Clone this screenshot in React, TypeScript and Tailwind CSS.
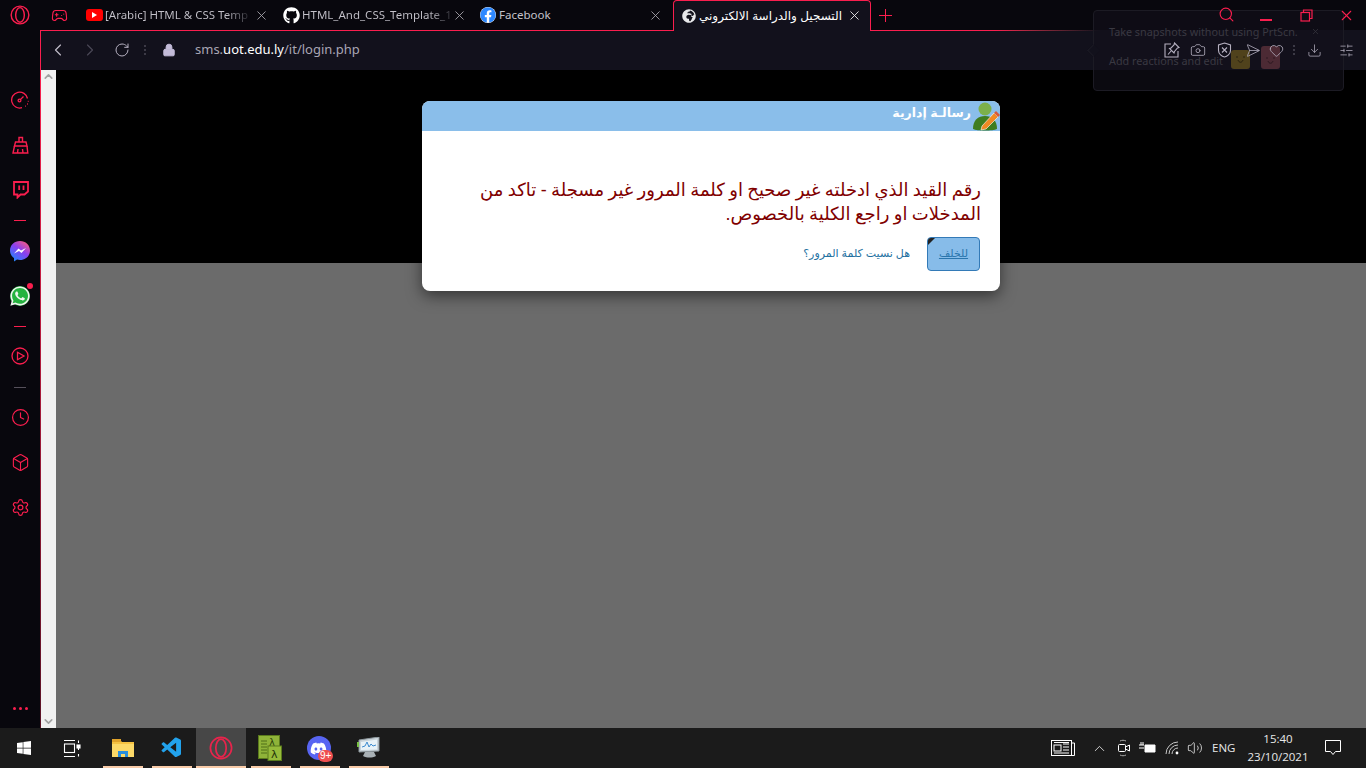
import React from "react";
import { ChevronLeft, ChevronRight, RotateCw, Lock, X, Search, Clock, Box, Settings, Gamepad2, Camera, Heart, Download, SlidersHorizontal, ChevronUp, ChevronDown, Send, Volume2 } from "lucide-react";
import { FaWhatsapp, FaWindows, FaDiscord, FaGithub, FaFacebook, FaGlobeAfrica } from "react-icons/fa";
import { VscVscode } from "react-icons/vsc";

const PINK = "#fa1e4e";

function OperaLogo({ size = 20, color = PINK }: { size?: number; color?: string }) {
  return (
    <svg width={size} height={size} viewBox="0 0 24 24" fill="none" stroke={color} strokeWidth="1.7">
      <circle cx="12" cy="12" r="10.6" />
      <ellipse cx="12" cy="12" rx="5.2" ry="8.8" />
    </svg>
  );
}

function Tab({ icon, title, fade }: { icon: React.ReactNode; title: string; fade?: boolean }) {
  return (
    <div className="w-[197px] h-[30px] flex items-center pl-[7px] pr-[6px] shrink-0">
      <span className="w-[18px] h-[18px] flex items-center justify-center shrink-0">{icon}</span>
      <span className={`ml-[2px] text-[11.5px] whitespace-nowrap font-['Noto_Sans',sans-serif] ${fade ? "bg-gradient-to-r from-[#c4c2ca] from-[85%] to-[#2a2930] bg-clip-text text-transparent" : "text-[#c4c2ca]"}`}>{title}</span>
      <div className="flex-1" />
      <X size={15} strokeWidth={1.4} className="text-[#a8a6ad] shrink-0" />
    </div>
  );
}

function SideIcon({ children, h }: { children?: React.ReactNode; h: number }) {
  return <div className="w-full flex items-center justify-center shrink-0" style={{ height: h }}>{children}</div>;
}

function Divider() {
  return <div className="w-[12px] h-px bg-[#fa1e4e]" />;
}

function Sidebar() {
  const c = { color: PINK };
  return (
    <div className="w-[40px] h-full bg-[#08070d] flex flex-col items-center shrink-0">
      <div className="h-[30px] flex items-center justify-center shrink-0"><OperaLogo /></div>
      <div className="h-[51px] shrink-0" />
      <SideIcon h={38}>
        <svg width="18" height="18" viewBox="0 0 18 18" fill="none" stroke={PINK} strokeWidth="1.3">
          <path d="M16.5 7.5 A8 8 0 1 0 11 16.7" />
          <circle cx="8.5" cy="9.5" r="1.4" />
          <path d="M9.6 8.4 L12.5 5.5" />
          <path d="M14 15.2 h.8 M16 13 h.8 M16.8 10.4 h.8" />
        </svg>
      </SideIcon>
      <SideIcon h={52}>
        <svg width="17" height="18" viewBox="0 0 17 18" fill="none" stroke={PINK} strokeWidth="1.4">
          <path d="M7 6 V1.5 H10.5 V6" />
          <path d="M3.5 6 H14 L15 10 H2.5 Z" />
          <path d="M2.5 10 L1 17 H15.8 L15 10" />
          <path d="M6 13 L5.5 17 M10.5 13 L11 17" />
        </svg>
      </SideIcon>
      <SideIcon h={38}>
        <svg width="17" height="18" viewBox="0 0 17 18" fill="none" stroke={PINK} strokeWidth="1.8">
          <path d="M2 1 H16 V10.5 L12.5 13.5 H8.5 L5.5 16.5 V13.5 H2 Z" />
          <path d="M7.2 4.5 V9 M11.5 4.5 V9" />
        </svg>
      </SideIcon>
      <SideIcon h={22}><Divider /></SideIcon>
      <SideIcon h={40}>
        <svg width="20" height="21" viewBox="0 0 20 21">
          <defs>
            <linearGradient id="msg" x1="0.15" y1="1" x2="0.85" y2="0">
              <stop offset="0" stopColor="#1a8cff" />
              <stop offset="0.55" stopColor="#8a3ff0" />
              <stop offset="1" stopColor="#ff5c7a" />
            </linearGradient>
          </defs>
          <path d="M10 0 C15.7 0 20 4 20 9.5 C20 15 15.7 19 10 19 C9 19 8 18.9 7 18.6 L4 20.5 V17 C1.5 15.2 0 12.6 0 9.5 C0 4 4.3 0 10 0 Z" fill="url(#msg)" />
          <path d="M4 12.5 L8.5 7.5 L11 9.5 L16 7 L11.5 12 L9 10 Z" fill="#fff" />
        </svg>
      </SideIcon>
      <SideIcon h={50}>
        <span className="relative w-[20px] h-[20px] rounded-full bg-[#25b33f] flex items-center justify-center">
          <FaWhatsapp size={22} className="text-[#f0f5ef] absolute" />
          <span className="absolute -top-[3px] -right-[3px] w-[6px] h-[6px] rounded-full bg-[#fa1e4e]" />
        </span>
      </SideIcon>
      <SideIcon h={10}><Divider /></SideIcon>
      <SideIcon h={50}>
        <svg width="18" height="18" viewBox="0 0 18 18" fill="none" stroke={PINK} strokeWidth="1.3">
          <circle cx="9" cy="9" r="8" />
          <path d="M6.5 5.3 L13 9 L6.5 12.7 Z" />
        </svg>
      </SideIcon>
      <SideIcon h={12}><div className="w-[12px] h-px bg-[#55505a]" /></SideIcon>
      <SideIcon h={48}><Clock size={19} strokeWidth={1.5} style={c} /></SideIcon>
      <SideIcon h={42}><Box size={19} strokeWidth={1.4} style={c} /></SideIcon>
      <SideIcon h={48}><Settings size={19} strokeWidth={1.5} style={c} /></SideIcon>
      <div className="flex-1" />
      <div className="flex gap-[3px] mb-[18px]">
        <span className="w-[3px] h-[3px] rounded-full bg-[#fa1e4e]" />
        <span className="w-[3px] h-[3px] rounded-full bg-[#fa1e4e]" />
        <span className="w-[3px] h-[3px] rounded-full bg-[#fa1e4e]" />
      </div>
    </div>
  );
}

function TabStrip() {
  return (
    <div className="h-[31px] flex items-start bg-[#08070d] shrink-0 relative">
      <div className="absolute left-0 right-0 bottom-0 h-px bg-gradient-to-r from-[#fa1e4e] from-[72%] to-[#12111c] to-[80%]" />
      <div className="w-[38px] h-[30px] flex items-center justify-center shrink-0"><Gamepad2 size={17} strokeWidth={1.6} style={{ color: PINK }} /></div>
      <Tab fade title="[Arabic] HTML & CSS Temp" icon={<span className="relative flex items-center justify-center w-[17px] h-[12px] rounded-[3px] bg-[#f00]"><span className="w-0 h-0 border-l-[5px] border-l-white border-y-[3px] border-y-transparent" /></span>} />
      <Tab fade title="HTML_And_CSS_Template_1" icon={<FaGithub size={17} className="text-white" />} />
      <Tab title="Facebook" icon={<FaFacebook size={16} className="text-[#2d88ff] bg-white rounded-full" />} />
      <div className="relative w-[198px] h-[31px] ml-[4px] shrink-0 flex items-center pl-[7px] pr-[8px] pb-[1px] bg-[#12111c] border-t border-x border-[#fa1e4e] rounded-t-[4px]">
        <span className="w-[15px] h-[15px] flex items-center justify-center shrink-0"><FaGlobeAfrica size={14} className="text-[#e8e8ea]" /></span>
        <span dir="rtl" className="ml-[3px] text-[12px] text-white whitespace-nowrap font-['Liberation_Sans','DejaVu_Sans',sans-serif]">التسجيل والدراسة الالكتروني</span>
        <div className="flex-1" />
        <X size={15} strokeWidth={1.5} className="text-[#e0e0e2] shrink-0" />
      </div>
      <div className="w-[28px] h-[30px] flex items-center justify-center shrink-0">
        <svg width="13" height="13" viewBox="0 0 13 13" stroke={PINK} shapeRendering="crispEdges"><path d="M6.5 0 V13 M0 6.5 H13" /></svg>
      </div>
      <div className="flex-1" />
      <div className="flex items-center h-[30px] shrink-0 relative z-20">
        <div className="w-[40px] flex justify-center pb-[2px]"><Search size={17} strokeWidth={1.6} style={{ color: PINK }} /></div>
        <div className="w-[40px] flex justify-center pt-[10px]"><div className="w-[12px] h-[1.5px] bg-[#fa1e4e]" /></div>
        <div className="w-[40px] flex justify-center">
          <svg width="13" height="13" viewBox="0 0 13 13" fill="none" stroke={PINK} strokeWidth="1.2"><rect x="1" y="3.5" width="8.5" height="8.5" /><path d="M3.5 3.5 V1 H12 V9.5 H9.5" /></svg>
        </div>
        <div className="w-[40px] flex justify-center"><X size={17} strokeWidth={1.5} style={{ color: PINK }} /></div>
      </div>
    </div>
  );
}

function Dots() {
  return (
    <div className="flex flex-col gap-[2px]">
      <span className="w-[2px] h-[2px] bg-[#3c3a46]" /><span className="w-[2px] h-[2px] bg-[#3c3a46]" /><span className="w-[2px] h-[2px] bg-[#3c3a46]" />
    </div>
  );
}

function AddressBar() {
  const ic = "text-[#b5b0c0]";
  return (
    <div className="h-[39px] pb-[1px] flex items-center bg-[#12111c] border-l border-[#fa1e4e] shrink-0">
      <ChevronLeft size={20} strokeWidth={1.4} className="ml-[7px] text-[#c0bcc8]" />
      <ChevronRight size={20} strokeWidth={1.4} className="ml-[12px] text-[#4a4856]" />
      <RotateCw size={16} strokeWidth={1.5} className="ml-[14px] text-[#b5b0c0]" />
      <div className="ml-[14px]"><Dots /></div>
      <Lock size={14} fill="#c3bbd8" strokeWidth={1.6} className="ml-[16px] text-[#c3bbd8]" />
      <span className="ml-[19px] text-[13px] text-[#a9a6b4] font-['Noto_Sans',sans-serif]">sms.<span className="text-white">uot.edu.ly</span>/it/login.php</span>
      <div className="flex-1" />
      <div className="flex items-center relative z-20">
        <svg width="16" height="16" viewBox="0 0 16 16" fill="none" stroke="#b5b0c0" strokeWidth="1.1">
          <path d="M7 2 H1 V15 H14 V9" />
          <path d="M10.5 1 L15 5.5 L13.5 6 L10.5 9.5 L10 11 L5.5 6.5 L7 6 L10 3 Z" />
          <path d="M7.5 8.5 L4 12.5" />
        </svg>
        <Camera size={16} strokeWidth={1.2} className={`ml-[10px] ${ic}`} />
        <svg width="15" height="16" viewBox="0 0 15 16" fill="none" stroke="#b5b0c0" strokeWidth="1.1" className="ml-[11px]"><path d="M7.5 1 L13.5 3 V8.5 C13.5 12 10 14.5 7.5 15 C5 14.5 1.5 12 1.5 8.5 V3 Z" /><path d="M5 5.5 L10 10.5 M10 5.5 L5 10.5" /></svg>
        <Send size={15} strokeWidth={1.2} className={`ml-[11px] ${ic} rotate-45`} />
        <Heart size={15} strokeWidth={1.3} className={`ml-[11px] ${ic}`} />
        <div className="ml-[9px]"><Dots /></div>
        <Download size={15} strokeWidth={1.2} className={`ml-[12px] ${ic}`} />
        <SlidersHorizontal size={15} strokeWidth={1.2} className={`ml-[17px] mr-[12px] ${ic}`} />
      </div>
    </div>
  );
}

function Scrollbar() {
  return (
    <div className="w-[15px] bg-[#f1f1f1] flex flex-col justify-between items-center shrink-0">
      <ChevronUp size={13} strokeWidth={3} className="text-[#a3a3a3]" />
      <ChevronDown size={13} strokeWidth={3} className="text-[#a3a3a3]" />
    </div>
  );
}

function Dialog() {
  return (
    <div className="absolute left-[366px] top-[31px] w-[578px] h-[190px] rounded-[8px] bg-white shadow-[0_5px_15px_rgba(0,0,0,0.5)] overflow-hidden font-['Liberation_Sans','DejaVu_Sans',sans-serif]" dir="rtl">
      <div className="h-[30px] bg-[#8abeea] flex items-center">
        <svg width="29" height="30" viewBox="0 0 29 30" className="shrink-0">
          <circle cx="14" cy="8" r="6.5" fill="#7cb04a" />
          <path d="M2 28 C2 19 7 15 14 15 C21 15 26 19 26 28 C22 30 6 30 2 28 Z" fill="#3f7d1f" />
          <path d="M11 25 L23 12 L27 16 L15 28 L10 29 Z" fill="#f08a24" stroke="#fff" strokeWidth="0.6" />
          <path d="M23 12 L25 10 L29 14 L27 16 Z" fill="#d85a3a" />
        </svg>
        <span className="text-white text-[12.5px] font-bold pb-[5px]">رسالـة إدارية</span>
      </div>
      <div className="pt-[47px] pr-[19px] pl-[16px]">
        <p className="text-[18px] leading-[24px] text-[#800000] [word-spacing:-0.6px]">رقم القيد الذي ادخلته غير صحيح او كلمة المرور غير مسجلة - تاكد من المدخلات او راجع الكلية بالخصوص.</p>
      </div>
      <div className="mt-[11px] pr-[20px] flex items-center">
        <div className="relative w-[53px] h-[34px] pb-[2px] rounded-[4px] bg-[#87bce9] border border-[#337ab7] flex items-center justify-center overflow-hidden">
          <span className="absolute top-0 left-0 w-0 h-0 border-t-[7px] border-t-[#222] border-r-[7px] border-r-transparent" />
          <span className="text-[11px] text-[#2a76ad] underline">للخلف</span>
        </div>
        <span className="mr-[17px] pb-[2px] text-[11px] text-[#23709f]">هل نسيت كلمة المرور؟</span>
      </div>
    </div>
  );
}

function Popup() {
  return (
    <div className="absolute left-[1093px] top-[10px] w-[251px] h-[81px] rounded-[4px] border border-[#1c1b24] bg-[#12111a]/60 z-10 font-['Noto_Sans',sans-serif]">
      <span className="absolute -left-[5px] top-[35px] w-[9px] h-[9px] rotate-45 border-l border-b border-[#1c1b24] bg-[#12111c]" />
      <div className="absolute left-[15px] top-[13px] text-[10.8px] text-[#3a3942] whitespace-nowrap">Take snapshots without using PrtScn.</div>
      <X size={9} className="absolute left-[217px] top-[16px] text-[#35343d]" />
      <div className="absolute left-[15px] top-[42px] text-[10.8px] text-[#3a3942] whitespace-nowrap">Add reactions and edit</div>
      <div className="absolute left-[137px] top-[39px] w-[19px] h-[19px] rounded-[3px] bg-[#50421c] flex items-center justify-center">
        <svg width="11" height="7" viewBox="0 0 11 7" fill="none" stroke="#2a2210"><path d="M2 0 V2 M9 0 V2 M3 4 C4 7 7 7 8 4" /></svg>
      </div>
      <div className="absolute left-[167px] top-[35px] w-[19px] h-[23px] rounded-[3px] bg-[#4c2a34] flex items-center justify-center pt-[5px]">
        <svg width="11" height="7" viewBox="0 0 11 7" fill="none" stroke="#2c1820"><path d="M2 0 V2 M9 0 V2 M3 4 C4 7 7 7 8 4" /></svg>
      </div>
    </div>
  );
}

function Taskbar() {
  const Item = ({ children, active }: { children: React.ReactNode; active?: boolean }) => (
    <div className={`relative w-[49.2px] h-full flex items-center justify-center shrink-0 ${active ? "bg-[#474747]" : ""}`}>
      {children}
      <span className={`absolute bottom-0 h-[2px] bg-[#f8cba8] ${active ? "left-0 right-0" : "left-[5px] right-[4px]"}`} />
    </div>
  );
  return (
    <div className="h-[40px] bg-[#1b1b1b] flex items-center shrink-0 font-['Liberation_Sans',sans-serif]">
      <div className="w-[48px] flex justify-center"><FaWindows size={16} className="text-white" /></div>
      <div className="w-[48px] flex justify-center">
        <svg width="18" height="17" viewBox="0 0 18 17" fill="none" stroke="#fff" strokeWidth="1.1"><path d="M1 .5H12M1 16.5H12" /><rect x="1.5" y="4" width="10" height="8.5" /><path d="M15.5 .5V3M15.5 7V10M15.5 14V16.5" /><rect x="14" y="5" width="3" height="3" fill="#fff" /></svg>
      </div>
      <div className="w-[2px]" />
      <div className="flex h-full">
        <Item>
          <svg width="22" height="20" viewBox="0 0 22 20"><path d="M0 2h8l2 2h12v14H0z" fill="#f5c242" /><rect y="1" width="9" height="3" fill="#e0a22a" /><path d="M0 6h22v13H0z" fill="#fcd968" /><path d="M6 19v-6h10v6h-3v-3H9v3z" fill="#2a8fdc" /></svg>
        </Item>
        <Item><VscVscode size={24} className="text-[#22a2ec]" /></Item>
        <Item active><OperaLogo size={24} color="#e8244c" /></Item>
        <Item>
          <svg width="24" height="26" viewBox="0 0 24 26">
            <rect x="0.5" y="0.5" width="21" height="23" fill="#8fb339" stroke="#5a7a1c" />
            <path d="M3 6h6M3 9h6M3 12h6M3 15h6M3 18h6" stroke="#4f6e18" />
            <text x="11" y="11" fontSize="10" fill="#2c3f0a" fontFamily="DejaVu Sans">λ</text>
            <rect x="10" y="11" width="13.5" height="14.5" fill="#96bb3a" stroke="#5a7a1c" />
            <text x="13" y="23" fontSize="11" fill="#23300a" fontFamily="DejaVu Sans">λ</text>
          </svg>
        </Item>
        <Item>
          <span className="relative w-[24px] h-[24px] rounded-full bg-[#5865f2] flex items-center justify-center">
            <FaDiscord size={17} className="text-white mr-[2px]" />
            <span className="absolute -right-[2px] -bottom-[2px] h-[12px] px-[2px] rounded-full bg-[#ef4f4f] text-white text-[10px] leading-[12px]">9+</span>
          </span>
        </Item>
        <Item>
          <svg width="24" height="22" viewBox="0 0 24 22">
            <path d="M2 3 L22 0 V14 L2 15 Z" fill="#c9d3d9" stroke="#8d979c" />
            <path d="M4 5 L20 2.5 V12.5 L4 13 Z" fill="#e8f2f7" />
            <path d="M5 10 L8 9 L10 5 L12 10 L14 7 L16 9 L19 8" stroke="#3e8bcf" strokeWidth="1" fill="none" />
            <path d="M8 15 H17 L19 19 C15 21 10 21 6 19 Z" fill="#a9b1b5" />
            <rect x="0" y="5" width="2" height="5" fill="#77c043" />
          </svg>
        </Item>
      </div>
      <div className="flex-1" />
      <div className="flex items-center h-full text-white">
        <svg width="24" height="16" viewBox="0 0 24 16" fill="none" stroke="#fff" strokeWidth="1"><rect x=".5" y=".5" width="20" height="15" /><path d="M20.5 3h3v12.5h-23" /><rect x="3" y="5" width="7" height="6" /><path d="M12 4h6M12 7h6M12 10h6M3 2.5h15M3 13h15" /></svg>
        <ChevronUp size={17} strokeWidth={1.1} className="ml-[16px]" />
        <svg width="14" height="18" viewBox="0 0 14 18" fill="none" stroke="#fff" strokeWidth="1" className="ml-[9px]">
          <rect x="1.5" y="5.5" width="7" height="7" rx="1" />
          <path d="M8.5 8 L12.5 6 V12 L8.5 10" />
          <path d="M3 2 C5 1 7 1 9 2 M3 16 C5 17 7 17 9 16" stroke="#aaa" />
        </svg>
        <svg width="17" height="12" viewBox="0 0 17 12" fill="none" stroke="#fff" className="ml-[8px]"><path d="M0 3h5M0 6h5M2 0v3M4 0v3" /><path d="M6 3h10v7H6z" fill="#fff" /></svg>
        <svg width="15" height="14" viewBox="0 0 15 14" fill="none" stroke="#c8c8c8" className="ml-[9px]"><path d="M1 13 A12 12 0 0 1 13 1 M4 13 A9 9 0 0 1 13 4 M7 13 A6 6 0 0 1 13 7" /><circle cx="12" cy="12" r="1.4" fill="#fff" stroke="none" /></svg>
        <Volume2 size={16} strokeWidth={1.1} className="ml-[7px]" />
        <span className="ml-[9px] w-[24px] text-[11.5px] text-[#e8e8e8] font-['Open_Sans',sans-serif]">ENG</span>
        <div className="ml-[12px] w-[60px] flex flex-col items-center text-[11.5px] leading-[18px] text-[#e8e8e8] font-['Open_Sans',sans-serif]">
          <span>15:40</span>
          <span>23/10/2021</span>
        </div>
        <svg width="16" height="16" viewBox="0 0 16 16" fill="none" stroke="#fff" className="ml-[17px] mr-[25px]"><path d="M.5 .5H15.5V11.5H10.5L8 14.5L5.5 11.5H.5Z" /></svg>
      </div>
    </div>
  );
}

export default function App() {
  return (
    <div className="relative w-[1366px] h-[768px] overflow-hidden flex flex-col bg-[#08070d] font-['Inter',sans-serif]">
      <div className="flex-1 min-h-0 flex">
        <Sidebar />
        <div className="flex-1 min-w-0 flex flex-col">
          <TabStrip />
          <AddressBar />
          <div className="flex-1 min-h-0 flex">
            <div className="w-px bg-gradient-to-b from-[#fa1e4e] to-[#5a1226] shrink-0" />
            <Scrollbar />
            <div className="relative flex-1 min-w-0 flex flex-col">
              <div className="h-[193px] bg-black" />
              <div className="flex-1 bg-[#6b6b6b]" />
              <Dialog />
            </div>
          </div>
        </div>
      </div>
      <Taskbar />
      <Popup />
    </div>
  );
}
